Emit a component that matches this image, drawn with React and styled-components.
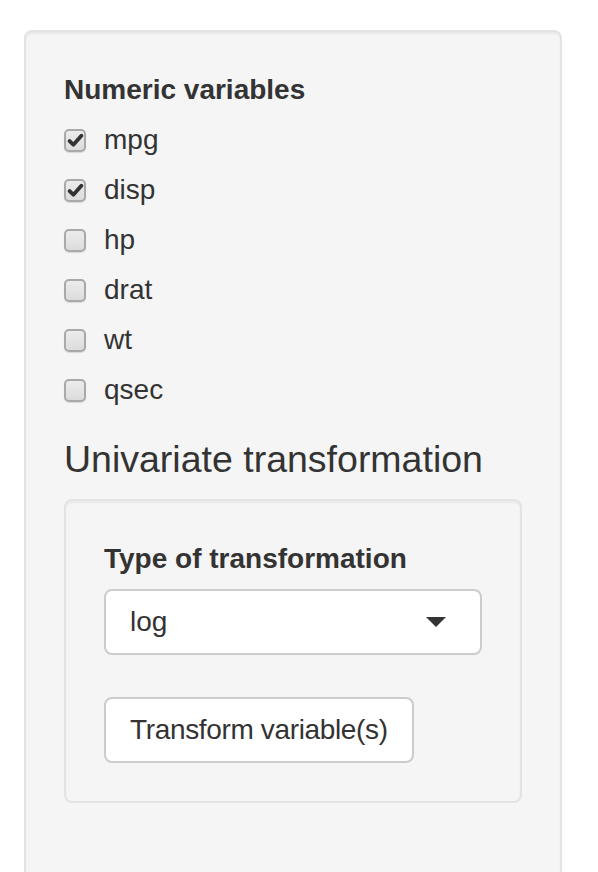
import React from "react";
import styled, { createGlobalStyle } from "styled-components";

const Global = createGlobalStyle`
  html, body { margin: 0; padding: 0; background: #fff; }
  body {
    font-family: "Liberation Sans", Arial, Helvetica, sans-serif;
    color: #333;
    font-size: 28px;
    line-height: 40px;
    overflow: hidden;
  }
`;

const Page = styled.div`
  padding: 30px 36px 0 24px;
  height: 872px;
  box-sizing: border-box;
  overflow: hidden;
`;

const Well = styled.div`
  background: #f5f5f5;
  border: 2px solid #e3e3e3;
  border-radius: 8px;
  box-shadow: inset 0 2px 2px rgba(0, 0, 0, 0.05);
  padding: 38px 38px ${(p) => (p.$tall ? "120px" : "38px")};
  display: flex;
  flex-direction: column;
`;

const Label = styled.div`
  font-weight: bold;
  font-size: 28px;
  line-height: 40px;
  margin-bottom: 10px;
`;

const Options = styled.div`
  display: flex;
  flex-direction: column;
  gap: 10px;
`;

const Row = styled.label`
  display: flex;
  align-items: center;
  height: 40px;
  font-size: 28px;
  gap: 18px;
`;

const Box = styled.span`
  width: 22px;
  height: 23px;
  margin-top: 1px;
  box-sizing: border-box;
  border: 2px solid #a9a9a9;
  border-radius: 5px;
  background: linear-gradient(#ececec, #dcdcdc);
  box-shadow: 0 1px 1px rgba(0, 0, 0, 0.12);
  display: flex;
  align-items: center;
  justify-content: center;
  flex: none;
`;

const Heading = styled.h4`
  margin: 29px 0 20px;
  font-size: 37.5px;
  font-weight: 500;
  line-height: 40px;
`;

const Select = styled.div`
  height: 66px;
  box-sizing: border-box;
  background: #fff;
  border: 2px solid #ccc;
  border-radius: 8px;
  padding: 0 34px 0 24px;
  display: flex;
  align-items: center;
  justify-content: space-between;
  font-size: 28px;
`;

const Caret = styled.span`
  width: 0;
  height: 0;
  border-left: 10px solid transparent;
  border-right: 10px solid transparent;
  border-top: 10px solid #333;
`;

const Button = styled.button`
  align-self: flex-start;
  margin-top: 42px;
  height: 66px;
  box-sizing: border-box;
  background: #fff;
  border: 2px solid #ccc;
  border-radius: 8px;
  padding: 0 24px;
  font-family: inherit;
  font-size: 28px;
  letter-spacing: -0.35px;
  color: #333;
`;

const Check = () => (
  <svg width="17" height="17" viewBox="0 0 16 16">
    <path d="M2.5 8.5 L6 12 L13.5 3.5" fill="none" stroke="#333" strokeWidth="3.6" strokeLinecap="round" strokeLinejoin="round" />
  </svg>
);

const vars = [
  { name: "mpg", checked: true },
  { name: "disp", checked: true },
  { name: "hp" },
  { name: "drat" },
  { name: "wt" },
  { name: "qsec" },
];

export default function App() {
  return (
    <>
      <Global />
      <Page>
        <Well $tall>
          <Label>Numeric variables</Label>
          <Options>
            {vars.map((v) => (
              <Row key={v.name}>
                <Box>{v.checked && <Check />}</Box>
                {v.name}
              </Row>
            ))}
          </Options>
          <Heading>Univariate transformation</Heading>
          <Well>
            <Label>Type of transformation</Label>
            <Select>
              log
              <Caret />
            </Select>
            <Button>Transform variable(s)</Button>
          </Well>
        </Well>
      </Page>
    </>
  );
}
